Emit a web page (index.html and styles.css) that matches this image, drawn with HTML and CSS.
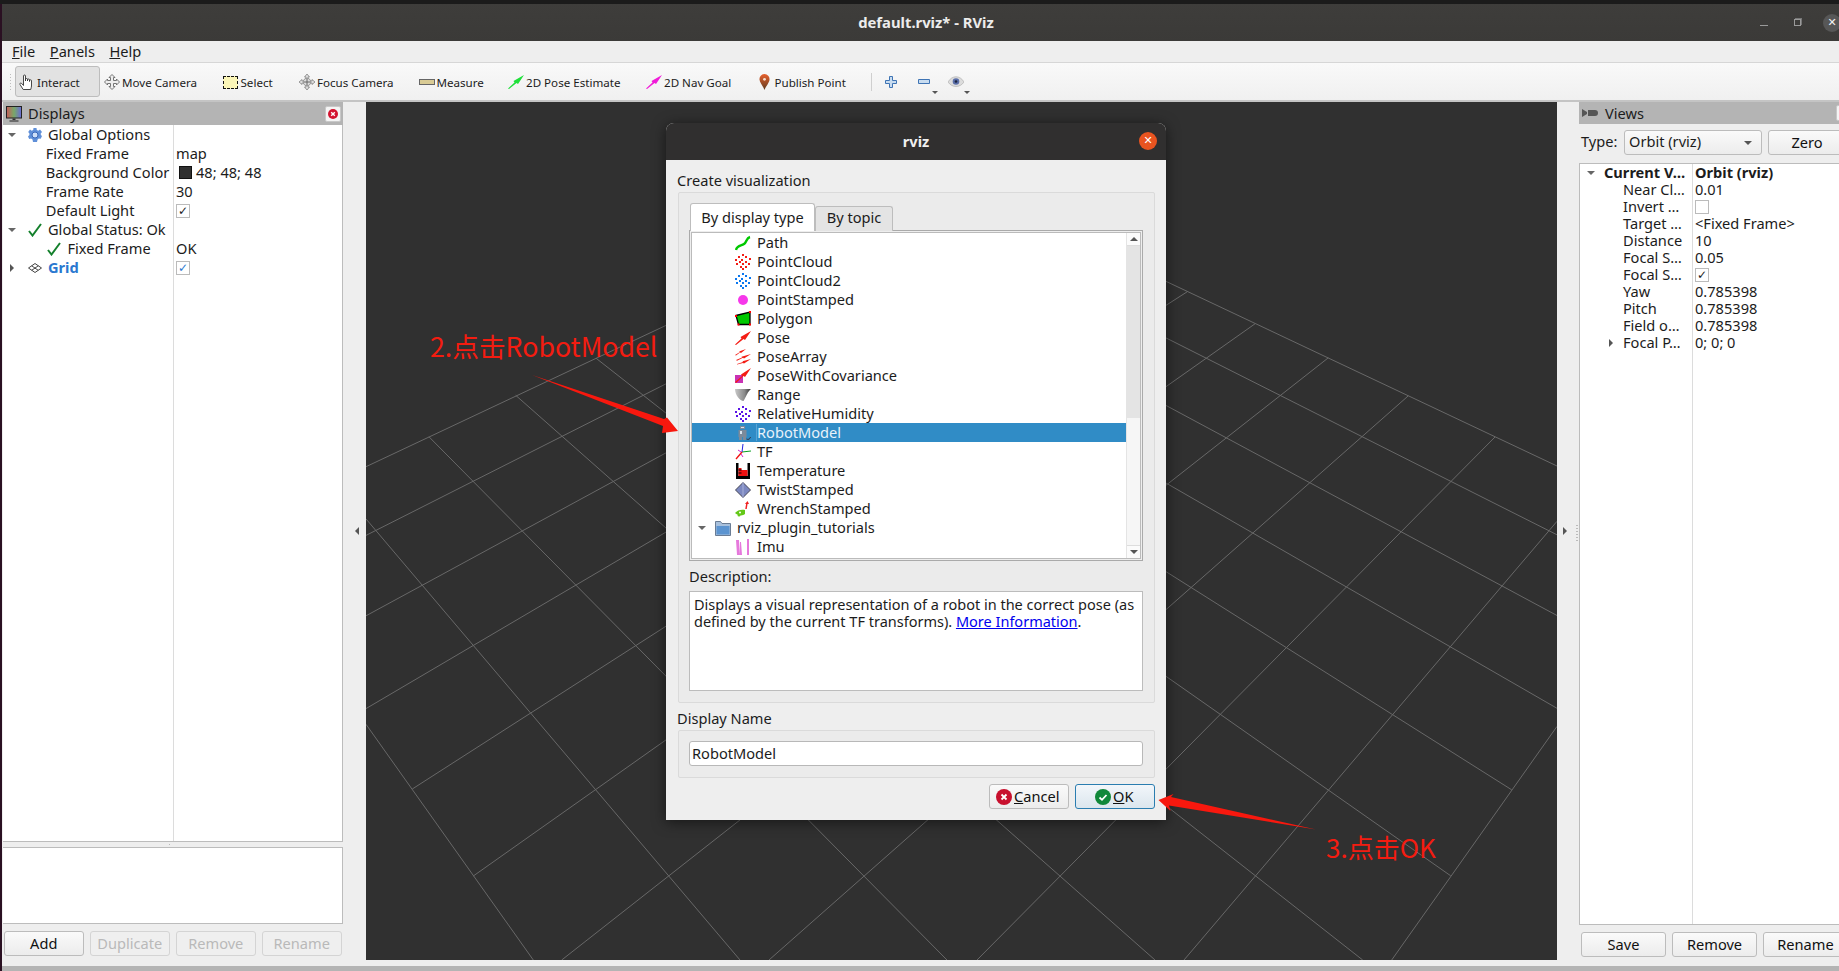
FILE: index.html
```html
<!DOCTYPE html>
<html>
<head>
    <meta charset="utf-8">
    <title>default.rviz* - RViz</title>
    <link rel="stylesheet" href="styles.css">
</head>
<body>
    <!-- icon set -->
    <svg class="defs" width="0" height="0">
        <defs>
            <linearGradient id="screen" x1="0" x2="1" y1="0" y2="0">
                <stop offset="0" stop-color="#c85a5a"/><stop offset=".5" stop-color="#78a868"/><stop offset="1" stop-color="#6a6ad8"/>
            </linearGradient>
            <linearGradient id="pin" x1="0" x2="0" y1="0" y2="1">
                <stop offset="0" stop-color="#e8602c"/><stop offset="1" stop-color="#5e3c22"/>
            </linearGradient>
            <linearGradient id="cone" x1="0" x2="1" y1="0" y2="0">
                <stop offset="0" stop-color="#c8c8c8"/><stop offset=".6" stop-color="#8a8a8a"/><stop offset="1" stop-color="#333"/>
            </linearGradient>
        </defs>
        <symbol id="i-monitor" viewBox="0 0 16 16"><rect x=".5" y=".5" width="15" height="11.5" fill="url(#screen)" stroke="#222"/><path d="M6.5 12.500h3v1.500h-3z" fill="#333"/><path d="M3.500 14.500h9v1h-9z" fill="#222"/></symbol>
        <symbol id="i-close" viewBox="0 0 10 10"><circle cx="5" cy="5" r="5" fill="#d3132f"/><path d="M3.200 3.200l3.600 3.600m0-3.600l-3.600 3.600" stroke="#fff" stroke-width="1.400"/></symbol>
        <symbol id="i-hand" viewBox="0 0 16 16"><path d="M4.500 9V2a1 1 0 0 1 2 0v5V5.500a1 1 0 0 1 2 0V7V6a1 1 0 0 1 2 0v1.500V6.800a1 1 0 0 1 2 0V12c0 1.500-.5 2-.8 3.500H4.200L1 10.500c-.6-1 .7-2 1.500-1.200L4.500 11.500z" fill="#fff" stroke="#333" stroke-width=".9"/></symbol>
        <symbol id="i-move" viewBox="0 0 16 16"><path d="M8 .5l3 3H9.500v3h3V5l3 3-3 3V9.500h-3v3H11l-3 3-3-3h1.500v-3h-3V11l-3-3 3-3v1.500h3v-3H5z" fill="#eee" stroke="#666" stroke-width=".9"/></symbol>
        <symbol id="i-focus" viewBox="0 0 16 16"><path d="M8 0l2.500 3H9v1.300A4 4 0 0 1 11.700 7H13V5.500L16 8l-3 2.500V9h-1.300A4 4 0 0 1 9 11.700V13h1.500L8 16l-2.500-3H7v-1.300A4 4 0 0 1 4.300 9H3v1.500L0 8l3-2.500V7h1.300A4 4 0 0 1 7 4.300V3H5.500z" fill="#ddd" stroke="#777" stroke-width=".7"/><path d="M8 4v8M4 8h8" stroke="#666"/></symbol>
        <symbol id="i-arrow" viewBox="0 0 16 14"><path d="M0 13.500l6.500-6L5.500 6 16 0 10 9 8.500 8 1 14z" fill="currentColor"/></symbol>
        <symbol id="i-pin" viewBox="0 0 11 16"><path d="M5.500 0a5 5 0 0 1 5 5.500c0 3-3.500 6.500-5 10.500C4 12 .5 8.500.5 5.500A5 5 0 0 1 5.500 0z" fill="url(#pin)"/><circle cx="5.500" cy="5.300" r="1.400" fill="#f6e0d0"/></symbol>
        <symbol id="i-plus" viewBox="0 0 12 12"><path d="M4.500.5h3v4h4v3h-4v4h-3v-4h-4v-3h4z" fill="#c8dcf0" stroke="#3f74b4"/></symbol>
        <symbol id="i-minus" viewBox="0 0 12 5"><path d="M.5.500h11v4H.5z" fill="#c8dcf0" stroke="#3f74b4"/></symbol>
        <symbol id="i-eye" viewBox="0 0 16 12"><path d="M0 6c4-7 12-7 16 0-4 6-12 6-16 0z" fill="#dcdcdc" stroke="#aaa" stroke-width=".6"/><circle cx="8" cy="5.500" r="3.300" fill="#5a6ea8"/><circle cx="8" cy="5.500" r="1.300" fill="#1c2440"/></symbol>
        <symbol id="i-gear" viewBox="0 0 14 14"><path d="M5.500 0h3l.3 2 1.500.7L12 1.500 14 4l-1.300 1.500.2 1.500 1.100 1-1.300 2.800-1.900-.3-1.200 1.100L9 14H5l-.5-2.400-1.400-1-1.900.5L0 8.500l1.400-1.400V5.500L.2 4 2 1.500l1.700 1.200 1.500-.7z" fill="#5f8fd8"/><circle cx="7" cy="7" r="3" fill="#cfe0f8" stroke="#3a68b8"/></symbol>
        <symbol id="i-check" viewBox="0 0 14 14"><path d="M1 8l3.500 4.500L13 1" fill="none" stroke="#14802c" stroke-width="2"/></symbol>
        <symbol id="i-grid" viewBox="0 0 14 10"><path d="M7 .5L13.500 5 7 9.500.5 5zM3.700 2.800l6.500 4.500M10.300 2.800L3.700 7.300" fill="none" stroke="#444"/></symbol>
        <symbol id="i-path" viewBox="0 0 16 16"><path d="M1 15c1-5 5-4 8-6s2-6 6-7" fill="none" stroke="#00c800" stroke-width="2.400"/></symbol>
        <symbol id="i-dots" viewBox="0 0 16 16"><path d="M7 0h2v2H7zM3 2h2v2H3zM10 2h2v2h-2zM14 4h2v2h-2zM0 5h2v2H0zM6 5h2v2H6zM4 7h2v2H4zM10 7h2v2h-2zM1 9h2v2H1zM7 9h2v2H7zM13 9h2v2h-2zM5 12h2v2H5zM10 12h2v2h-2zM7 14h2v2H7z" fill="currentColor"/></symbol>
        <symbol id="i-point" viewBox="0 0 16 16"><circle cx="8" cy="8" r="5" fill="#f638ea"/></symbol>
        <symbol id="i-polygon" viewBox="0 0 16 16"><path d="M1 4.500L15 1v12.500H3.500z" fill="#00c800" stroke="#000" stroke-width="1.300"/><path d="M0 4h2v2H0zM14 0h2v2h-2zM2.500 12.500h2v2h-2zM14 12.500h2v2h-2z" fill="#f00"/></symbol>
        <symbol id="i-posearray" viewBox="0 0 16 16"><path d="M0 6l5-3-1-.5L11 0 6 4l-1-.6-4 3zM1 11l6-2.500-.5-.8L16 5l-7 4.500-1-.7-6 3zM2 15l6-2-.5-.8L16 10l-7 4.500-1-.6-6 1.500z" fill="#f41c14"/></symbol>
        <symbol id="i-cov" viewBox="0 0 16 16"><path d="M0 7h8v8H0z" fill="#c832b4"/><path d="M0 14l7-6-1-1.500L16 0 10 9 8.500 8 1 15z" fill="#f41c14"/></symbol>
        <symbol id="i-range" viewBox="0 0 16 14"><path d="M0 1h16c-3 2-5 8-7.500 12C5 13 0 7 0 1z" fill="url(#cone)"/></symbol>
        <symbol id="i-robot" viewBox="0 0 16 16"><path d="M5 1h5v3H5zM3.500 5h8v7h-8zM4 12h3v3H4zM8 12h3v3H8z" fill="#7c8a9a"/><path d="M6 2h3v1H6zM5 6h2v3H5z" fill="#d8e4f0"/><path d="M11.500 14c2 1 3.500 0 4-2" fill="none" stroke="#334" /></symbol>
        <symbol id="i-tf" viewBox="0 0 16 16"><path d="M7 8l9-1" stroke="#08a020" fill="none"/><path d="M7 8L8 0" stroke="#2222e0" fill="none"/><path d="M7 8l-6 7" stroke="#f01010" stroke-width="1.300" fill="none"/><path d="M3 6l3 2M6 10l2 3" stroke="#d020d0" fill="none"/></symbol>
        <symbol id="i-temp" viewBox="0 0 14 16"><path d="M0 0h2.500v13h9V0H14v16H0z" fill="#000"/><path d="M2.500 5h3v2h6v6h-9z" fill="#ee1010"/><path d="M2.500 6.500h3v1h-3zM2.500 9.500h3v1h-3z" fill="#000"/></symbol>
        <symbol id="i-twist" viewBox="0 0 16 16"><path d="M8 .5L15.500 8 8 15.500.5 8z" fill="#7c88c0" stroke="#445" /><path d="M8 .5V15.500" stroke="#a8b0d8"/></symbol>
        <symbol id="i-wrench" viewBox="0 0 16 16"><path d="M0 12c2-3 7-4 10-3v4c-2 2-7 2-10-1z" fill="#64c818"/><circle cx="4" cy="14" r="1.500" fill="#64c818"/><path d="M11 8l1-6" stroke="#f02020" stroke-width="1.500"/><path d="M10 3l2.500-3L14 3z" fill="#f02020"/><circle cx="5" cy="11.500" r="1" fill="#fff"/></symbol>
        <symbol id="i-folder" viewBox="0 0 16 16"><path d="M.5 1.500h5l1.500 2h8.500v12H.5z" fill="#a8c0dc" stroke="#6a7c94"/><path d="M1.500 6h13v8.500h-13z" fill="#5c94d0"/></symbol>
        <symbol id="i-imu" viewBox="0 0 16 16"><path d="M1 1l3 0 1 15H2zM5 3h1l1 13H5zM12 0h2v16h-2z" fill="#e678dc"/></symbol>
        <symbol id="i-cam" viewBox="0 0 16 8"><path d="M0 0l5 3v2L0 8zM6 1h7a3 3 0 0 1 0 6H6z" fill="#555"/></symbol>
        <symbol id="i-cancel" viewBox="0 0 16 16"><circle cx="8" cy="8" r="8" fill="#c8102e"/><path d="M5.500 5.500l5 5m0-5l-5 5" stroke="#fff" stroke-width="1.800"/></symbol>
        <symbol id="i-ok" viewBox="0 0 16 16"><circle cx="8" cy="8" r="8" fill="#10883a"/><path d="M4.500 8.500l2.500 2.300L11.500 6" fill="none" stroke="#fff" stroke-width="1.800"/></symbol>
    </svg>

    <div class="topstrip"></div>
    <header class="titlebar">
        <div class="title">default.rviz* - RViz</div>
        <div class="winbtn w-min"><span class="win-min"></span></div>
        <div class="winbtn w-max"><span class="win-max"></span></div>
        <div class="winbtn w-close"><span class="win-close">&#10005;</span></div>
    </header>

    <nav class="menubar">
        <span><u>F</u>ile</span>
        <span><u>P</u>anels</span>
        <span><u>H</u>elp</span>
    </nav>

    <div class="toolbar">
        <div class="grip"></div>
        <div class="tool t-interact"><svg class="ico"><use href="#i-hand"/></svg>Interact</div>
        <div class="tool t-move"><svg class="ico"><use href="#i-move"/></svg>Move Camera</div>
        <div class="tool t-select"><span class="selbox"></span>Select</div>
        <div class="tool t-focus"><svg class="ico"><use href="#i-focus"/></svg>Focus Camera</div>
        <div class="tool t-measure"><span class="ruler"></span>Measure</div>
        <div class="tool t-pose"><svg class="ico green"><use href="#i-arrow"/></svg>2D Pose Estimate</div>
        <div class="tool t-nav"><svg class="ico magenta"><use href="#i-arrow"/></svg>2D Nav Goal</div>
        <div class="tool t-publish"><svg class="ico pin"><use href="#i-pin"/></svg>Publish Point</div>
        <div class="tool-sep"></div>
        <svg class="ico-plus"><use href="#i-plus"/></svg>
        <svg class="ico-minus"><use href="#i-minus"/></svg><span class="drop drop-minus"></span>
        <svg class="ico-eye"><use href="#i-eye"/></svg><span class="drop drop-eye"></span>
    </div>

    <main class="mainarea">
        <section class="panel-left">
            <div class="dock-title">
                <svg class="ico"><use href="#i-monitor"/></svg>
                <span class="dock-name">Displays</span>
                <span class="dock-close"><svg class="close-ico"><use href="#i-close"/></svg></span>
            </div>
            <div class="tree">
                <div class="prow"><div class="pname"><span class="tw open"></span><svg class="tico"><use href="#i-gear"/></svg>Global Options</div><div class="pval"></div></div>
                <div class="prow"><div class="pname child">Fixed Frame</div><div class="pval">map</div></div>
                <div class="prow"><div class="pname child">Background Color</div><div class="pval"><span class="swatch"></span>48; 48; 48</div></div>
                <div class="prow"><div class="pname child">Frame Rate</div><div class="pval">30</div></div>
                <div class="prow"><div class="pname child">Default Light</div><div class="pval"><span class="cb on">&#10003;</span></div></div>
                <div class="prow"><div class="pname"><span class="tw open"></span><svg class="tico"><use href="#i-check"/></svg>Global Status: Ok</div><div class="pval"></div></div>
                <div class="prow"><div class="pname child2"><svg class="tico"><use href="#i-check"/></svg>Fixed Frame</div><div class="pval">OK</div></div>
                <div class="prow"><div class="pname gridname"><span class="tw shut"></span><svg class="tico"><use href="#i-grid"/></svg>Grid</div><div class="pval"><span class="cb on blue">&#10003;</span></div></div>
                <div class="prow fill"><div class="pname"></div><div class="pval"></div></div>
            </div>
            <div class="split-h"></div>
            <div class="helpbox"></div>
            <div class="btnrow">
                <button class="qbtn">Add</button>
                <button class="qbtn off">Duplicate</button>
                <button class="qbtn off">Remove</button>
                <button class="qbtn off">Rename</button>
            </div>
        </section>

        <div class="sidehandle"><span class="arrow-l"></span></div>

        <div class="viewport">
            <svg class="grid3d" viewBox="366 102 1191 858">
                <g stroke="#686868" stroke-width="1" fill="none">
                    <path d="M366 466.700L963 185.500"/>
                    <path d="M366 535.400L1012 209"/>
                    <path d="M366 615.800L1067 235"/>
                    <path d="M366 708.600L1125 262"/>
                    <path d="M412.300 789L1187.300 291.700"/>
                    <path d="M473.300 876L1255 323.800"/>
                    <path d="M561.700 960L1328.300 357.800"/>
                    <path d="M769 960L1408.300 395.800"/>
                    <path d="M977 960L1495 437"/>
                    <path d="M1184 960L1557 521.300"/>
                    <path d="M1391.700 960L1557 726.400"/>
                    <path d="M963 185.500L1557 466"/>
                    <path d="M1100 304.700L1557 534.800"/>
                    <path d="M1100 370L1557 615.500"/>
                    <path d="M1100 445L1557 708.300"/>
                    <path d="M1100 530L1511.700 789.800"/>
                    <path d="M1000 560L1450.700 875.800"/>
                    <path d="M596 358.200L1362.700 960"/>
                    <path d="M515.700 395.300L1155 960"/>
                    <path d="M429 436.800L947 960"/>
                    <path d="M366 518.900L740 960"/>
                    <path d="M366 724.300L533.300 960"/>
                </g>
            </svg>
        </div>

        <div class="sidehandle right"><span class="arrow-r"></span><span class="vdots"></span></div>

        <section class="panel-right">
            <div class="dock-title short">
                <svg class="cam-ico"><use href="#i-cam"/></svg>
                <span class="dock-name">Views</span>
                <span class="dock-close"><svg class="close-ico"><use href="#i-close"/></svg></span>
            </div>
            <div class="typerow">
                <span class="typelabel">Type:</span>
                <div class="combo">Orbit (rviz)<span class="combo-arrow"></span></div>
                <button class="qbtn zero">Zero</button>
            </div>
            <div class="tree vtree">
                <div class="prow bold"><div class="pname"><span class="tw open"></span>Current V&#8230;</div><div class="pval">Orbit (rviz)</div></div>
                <div class="prow"><div class="pname">Near Cl&#8230;</div><div class="pval">0.01</div></div>
                <div class="prow"><div class="pname">Invert &#8230;</div><div class="pval"><span class="cb"></span></div></div>
                <div class="prow"><div class="pname">Target &#8230;</div><div class="pval">&lt;Fixed Frame&gt;</div></div>
                <div class="prow"><div class="pname">Distance</div><div class="pval">10</div></div>
                <div class="prow"><div class="pname">Focal S&#8230;</div><div class="pval">0.05</div></div>
                <div class="prow"><div class="pname">Focal S&#8230;</div><div class="pval"><span class="cb on">&#10003;</span></div></div>
                <div class="prow"><div class="pname">Yaw</div><div class="pval">0.785398</div></div>
                <div class="prow"><div class="pname">Pitch</div><div class="pval">0.785398</div></div>
                <div class="prow"><div class="pname">Field o&#8230;</div><div class="pval">0.785398</div></div>
                <div class="prow"><div class="pname"><span class="tw shut"></span>Focal P&#8230;</div><div class="pval">0; 0; 0</div></div>
                <div class="prow fill"><div class="pname"></div><div class="pval"></div></div>
            </div>
            <div class="btnrow vbtns">
                <button class="qbtn">Save</button>
                <button class="qbtn">Remove</button>
                <button class="qbtn">Rename</button>
            </div>
        </section>
    </main>
    <div class="statusbar"></div>

    <!-- modal dialog -->
    <div class="dialog">
        <div class="dlg-title">rviz<span class="dlg-close">&#10005;</span></div>
        <div class="dlg-label first">Create visualization</div>
        <div class="group main-group">
            <div class="tabs">
                <div class="tab active">By display type</div>
                <div class="tab">By topic</div>
            </div>
            <div class="tabpane">
                <div class="listbox">
                    <div class="rows">
                        <div class="lrow"><svg class="lico"><use href="#i-path"/></svg>Path</div>
                        <div class="lrow"><svg class="lico red"><use href="#i-dots"/></svg>PointCloud</div>
                        <div class="lrow"><svg class="lico azure"><use href="#i-dots"/></svg>PointCloud2</div>
                        <div class="lrow"><svg class="lico"><use href="#i-point"/></svg>PointStamped</div>
                        <div class="lrow"><svg class="lico"><use href="#i-polygon"/></svg>Polygon</div>
                        <div class="lrow"><svg class="lico red"><use href="#i-arrow"/></svg>Pose</div>
                        <div class="lrow"><svg class="lico"><use href="#i-posearray"/></svg>PoseArray</div>
                        <div class="lrow"><svg class="lico"><use href="#i-cov"/></svg>PoseWithCovariance</div>
                        <div class="lrow"><svg class="lico"><use href="#i-range"/></svg>Range</div>
                        <div class="lrow"><svg class="lico violet"><use href="#i-dots"/></svg>RelativeHumidity</div>
                        <div class="lrow sel"><svg class="lico"><use href="#i-robot"/></svg><span class="seltext">RobotModel</span></div>
                        <div class="lrow"><svg class="lico"><use href="#i-tf"/></svg>TF</div>
                        <div class="lrow"><svg class="lico"><use href="#i-temp"/></svg>Temperature</div>
                        <div class="lrow"><svg class="lico"><use href="#i-twist"/></svg>TwistStamped</div>
                        <div class="lrow"><svg class="lico"><use href="#i-wrench"/></svg>WrenchStamped</div>
                        <div class="lrow folder"><span class="tw open"></span><svg class="lico"><use href="#i-folder"/></svg>rviz_plugin_tutorials</div>
                        <div class="lrow"><svg class="lico"><use href="#i-imu"/></svg>Imu</div>
                    </div>
                    <div class="vscroll">
                        <div class="sb-btn"><span class="sb-up"></span></div>
                        <div class="sb-thumb"></div>
                        <div class="sb-rest"></div>
                        <div class="sb-btn"><span class="sb-down"></span></div>
                    </div>
                </div>
            </div>
            <div class="desc-label">Description:</div>
            <div class="descbox">Displays a visual representation of a robot in the correct pose (as<br>defined by the current TF transforms). <a href="#">More Information</a>.</div>
        </div>
        <div class="dlg-label second">Display Name</div>
        <div class="group name-group">
            <div class="nameinput">RobotModel</div>
        </div>
        <div class="dlg-buttons">
            <button class="dbtn"><svg class="dico"><use href="#i-cancel"/></svg><span><u>C</u>ancel</span></button>
            <button class="dbtn default"><svg class="dico"><use href="#i-ok"/></svg><span><u>O</u>K</span></button>
        </div>
    </div>

    <!-- red notes pasted on top of the screenshot -->
    <svg class="marks" viewBox="0 0 1839 971">
        <path d="M532 375L664 419 667 417.500 678 431 662 433 663 426z" fill="#f8180e"/>
        <path d="M1316 829.500L1171 797 1173.500 794 1158.500 800 1170.500 811 1169 805.500z" fill="#f8180e"/>
    </svg>
    <div class="note note-a">2.点击RobotModel</div>
    <div class="note note-b">3.点击OK</div>
</body>
</html>
```

FILE: styles.css
```css
* {
    box-sizing: border-box;
}
html, body {
    margin: 0;
    height: 100%;
}
body {
    width: 1839px;
    height: 971px;
    overflow: hidden;
    position: relative;
    padding-left: 2px;
    background-color: #2a1022;
    color: #1c1c1c;
    font: 14.600px/19px "Noto Sans", "Noto Sans CJK SC", sans-serif;
    display: flex;
    flex-direction: column;
}
.defs {
    position: absolute;
}
svg {
    display: block;
    flex: none;
}

/* window frame */
.topstrip {
    height: 4px;
    margin-left: -2px;
    background-color: #1b1b1b;
}
.titlebar {
    height: 37px;
    display: flex;
    align-items: center;
    padding-left: 96px;
    background: linear-gradient(#3e3d3b, #3b3a38);
}
.title {
    width: 1656px;
    flex: none;
    text-align: center;
    color: #ececec;
    font-weight: 700;
    font-size: 14.800px;
}
.winbtn {
    display: flex;
    align-items: center;
    justify-content: center;
    flex: none;
}
.w-min { width: 20px; }
.w-max { width: 46px; }
.w-close { width: 24px; }
.win-min {
    width: 8px;
    height: 1px;
    margin-top: 6px;
    background-color: #9a9a9a;
}
.win-max {
    width: 7px;
    height: 7px;
    border: 1px solid #9a9a9a;
    box-shadow: 1px -1px 0 #777;
}
.win-close {
    width: 18px;
    height: 18px;
    flex: none;
    border-radius: 50%;
    background-color: #575757;
    color: #f2f2f2;
    font: 11px/18px "DejaVu Sans", sans-serif;
    text-align: center;
}
.menubar {
    height: 22px;
    display: flex;
    gap: 14.500px;
    padding: 1px 0 0 10px;
    background-color: #eeeeee;
    border-bottom: 1px solid #d6d6d6;
}
.toolbar {
    height: 39px;
    display: flex;
    align-items: center;
    padding-left: 13px;
    position: relative;
    font-size: 11.600px;
    background: linear-gradient(#f9f9f9, #f0f0f0);
    border-bottom: 2px solid #c4c4c4;
}
.grip {
    width: 3px;
    height: 17px;
    margin-left: -6px;
    margin-right: 3px;
    flex: none;
    background: radial-gradient(circle, #bdbdbd 40%, transparent 45%) 0 0 / 3px 3px;
}
.tool {
    height: 31px;
    flex: none;
    display: flex;
    align-items: center;
    gap: 2px;
    padding-left: 4px;
    padding-top: 1px;
}
.ico {
    width: 16px;
    height: 16px;
}
.ico.green {
    color: #1fe03a;
    height: 14px;
}
.ico.magenta {
    color: #f01cd8;
    height: 14px;
}
.ico.pin {
    width: 11px;
    margin-right: 3px;
}
.t-interact {
    width: 85px;
    padding-left: 3px;
    background-color: #e2e2e2;
    border: 1px solid #bdbdbd;
    border-radius: 3px;
}
.t-move { width: 118.500px; }
.t-select { width: 76.500px; }
.t-focus { width: 119.500px; }
.t-measure { width: 89.500px; }
.t-pose { width: 138px; }
.t-nav { width: 112.500px; }
.t-publish { width: 116.500px; }
.selbox {
    width: 15px;
    height: 13px;
    background-color: #fbf6b8;
    border: 1px dashed #111;
    margin-right: 1px;
}
.ruler {
    width: 16px;
    height: 6px;
    background-color: #d9cb95;
    border: 1px solid #666;
}
.tool-sep {
    width: 1px;
    height: 18px;
    background-color: #cfcfcf;
    margin-right: 13px;
}
.ico-plus {
    width: 12px;
    height: 12px;
    margin-right: 21px;
}
.ico-minus {
    width: 12px;
    height: 5px;
}
.ico-eye {
    width: 16px;
    height: 12px;
    margin-left: 10px;
    margin-top: 1px;
}
.drop {
    border: 3px solid transparent;
    border-top: 3px solid #555;
    border-bottom: 0;
    margin: 21px 0 0 0;
}
.drop-minus {
    margin-left: 2px;
}

/* main row */
.mainarea {
    height: 864px;
    display: flex;
    background-color: #eeeeee;
}
.panel-left {
    width: 341px;
    flex: none;
    display: flex;
    flex-direction: column;
    padding-left: 1px;
    padding-bottom: 10px;
}
.dock-title {
    height: 23px;
    flex: none;
    display: flex;
    align-items: center;
    background-color: #b4b4b4;
    padding-left: 3px;
    gap: 6px;
}
.dock-title.short {
    height: 22px;
    gap: 5px;
}
.dock-name {
    flex: 1;
}
.dock-close {
    width: 16px;
    height: 16px;
    margin-right: 2px;
    background-color: #f4f4f4;
    border: 1px solid #c8c8c8;
    border-radius: 2px;
    display: flex;
    align-items: center;
    justify-content: center;
    flex: none;
}
.close-ico {
    width: 10px;
    height: 10px;
}
.cam-ico {
    width: 16px;
    height: 8px;
    margin-right: 2px;
}
.tree {
    flex: 1;
    display: flex;
    flex-direction: column;
    background-color: #fff;
    border: solid #bcbcbc;
    border-width: 0 1px 1px 0;
}
.prow {
    height: 19px;
    flex: none;
    display: grid;
    grid-template-columns: 170px 1fr;
}
.prow.fill {
    flex: 1;
}
.pname {
    display: flex;
    align-items: center;
    padding-left: 5px;
    white-space: nowrap;
}
.pname.child {
    padding-left: 42.800px;
}
.pname.child2 {
    padding-left: 43.500px;
}
.pname.child2 .tico {
    margin-right: 7px;
}
.gridname {
    color: #2a78d0;
    font-weight: 700;
}
.pval {
    display: flex;
    align-items: center;
    padding-left: 2px;
    border-left: 1px solid #dcdcdc;
    white-space: nowrap;
}
.tw {
    width: 10px;
    margin-right: 10px;
    flex: none;
    height: 0;
}
.tw.open {
    border: 4px solid transparent;
    border-top: 4px solid #666;
    border-bottom: 0;
    width: 8px;
    margin-right: 12px;
}
.tw.shut {
    border: 4px solid transparent;
    border-left: 4px solid #555;
    border-right: 0;
    width: 4px;
    margin: 0 14px 0 2px;
}
.tico {
    width: 14px;
    height: 14px;
    margin-right: 6px;
}
.gridname .tico {
    height: 10px;
}
.swatch {
    width: 13px;
    height: 13px;
    margin: 0 4px 0 3px;
    background-color: #303030;
    border: 1px solid #111;
}
.cb {
    width: 14px;
    height: 14px;
    border: 1px solid #bbb;
    background-color: #fff;
    text-align: center;
    font: 12px/12px "DejaVu Sans", sans-serif;
    font-weight: 700;
}
.cb.blue {
    color: #2a78d0;
}
.split-h {
    height: 5px;
    flex: none;
    background: radial-gradient(circle, #b8b8b8 40%, transparent 45%) 165px 1px / 3px 3px no-repeat;
}
.helpbox {
    height: 77px;
    flex: none;
    background-color: #fff;
    border: 1px solid #bcbcbc;
    border-left: 0;
}
.btnrow {
    display: flex;
    gap: 6.500px;
    margin-top: 7px;
    padding-left: 1px;
    padding-right: 1px;
    flex: none;
}
.qbtn {
    width: 79.500px;
    height: 25px;
    flex: none;
    padding: 0 0 2px;
    font: 14.600px "Noto Sans", sans-serif;
    color: #111;
    background: linear-gradient(#fafafa, #ececec);
    border: 1px solid #bcbcbc;
    border-radius: 3px;
}
.qbtn.off {
    color: #b9b9b9;
    border-color: #d4d4d4;
    background: #efefef;
}
.sidehandle {
    width: 23px;
    flex: none;
    display: flex;
    align-items: center;
    justify-content: center;
    padding-bottom: 6px;
    padding-left: 5px;
}
.sidehandle.right {
    width: 22px;
    padding-left: 0;
    position: relative;
}
.arrow-l {
    border: 4px solid transparent;
    border-right: 4px solid #555;
    border-left: 0;
}
.arrow-r {
    border: 4px solid transparent;
    border-left: 4px solid #555;
    border-right: 0;
    margin-right: 6px;
}
.vdots {
    position: absolute;
    right: 1px;
    top: 423px;
    width: 2px;
    height: 16px;
    background: repeating-linear-gradient(#bbb 0 1px, transparent 1px 3px);
}
.viewport {
    width: 1191px;
    height: 858px;
    flex: none;
    background-color: #303030;
}
.grid3d {
    width: 100%;
    height: 100%;
}
.panel-right {
    width: 275px;
    flex: none;
    display: flex;
    flex-direction: column;
    padding-bottom: 9px;
}
.typerow {
    display: flex;
    align-items: center;
    height: 25px;
    margin-top: 6px;
    flex: none;
    padding-left: 2px;
}
.typelabel {
    width: 43px;
    margin-top: -2px;
}
.combo {
    width: 138px;
    height: 25px;
    padding-left: 4px;
    line-height: 21px;
    position: relative;
    background: linear-gradient(#fafafa, #ececec);
    border: 1px solid #bcbcbc;
    border-radius: 3px;
}
.combo-arrow {
    position: absolute;
    right: 9px;
    top: 10px;
    border: 4px solid transparent;
    border-top: 4px solid #555;
    border-bottom: 0;
}
.qbtn.zero {
    margin-left: 6px;
    width: 78px;
}
.vtree {
    margin-top: 8px;
    border-width: 1px 0 1px 1px;
}
.vtree .prow {
    height: 17px;
    grid-template-columns: 112px 1fr;
    line-height: 17px;
}
.vtree .prow.fill {
    flex: 1;
}
.vtree .pname {
    padding-left: 43px;
}
.vtree .bold .pname {
    padding-left: 7px;
}
.vtree .bold .tw {
    margin-right: 9px;
}
.vtree .tw.shut {
    margin: 0 10px 0 -14px;
}
.bold {
    font-weight: 700;
}
.vbtns {
    margin-top: 7px;
    gap: 6px;
    padding-left: 2px;
}
.vbtns .qbtn {
    width: 85px;
}
.statusbar {
    flex: 1;
    background-color: #b4b4b4;
}

/* dialog */
.dialog {
    position: absolute;
    left: 666px;
    top: 123px;
    width: 500px;
    height: 697px;
    background-color: #eeeeee;
    border-radius: 8px 8px 0 0;
    box-shadow: 0 2px 14px rgba(0, 0, 0, 0.55);
}
.dlg-title {
    height: 37px;
    position: relative;
    background-color: #302f2f;
    border-radius: 8px 8px 0 0;
    color: #f0f0f0;
    text-align: center;
    font-weight: 700;
    font-size: 14.600px;
    line-height: 37px;
}
.dlg-close {
    position: absolute;
    right: 9px;
    top: 9px;
    width: 18px;
    height: 18px;
    border-radius: 50%;
    background-color: #e95420;
    color: #fff;
    font: 11px/18px "DejaVu Sans", sans-serif;
}
.dlg-label {
    padding-left: 11px;
    line-height: 20px;
    white-space: nowrap;
}
.dlg-label.first {
    height: 32px;
    padding-top: 10px;
}
.dlg-label.second {
    height: 27px;
    padding-top: 5px;
}
.group {
    margin-left: 12px;
    width: 477px;
    background-color: #ebebeb;
    border: 1px solid #dadada;
    border-radius: 2px;
    padding-left: 10px;
}
.main-group {
    height: 511px;
    padding-top: 10px;
}
.tabs {
    display: flex;
    align-items: flex-end;
    height: 28px;
    padding-left: 1px;
    margin-bottom: -1px;
    position: relative;
}
.tab {
    width: 78px;
    height: 25px;
    padding-top: 1px;
    text-align: center;
    background-color: #e4e4e4;
    border: 1px solid #bdbdbd;
    border-bottom: 0;
    border-radius: 3px 3px 0 0;
}
.tab.active {
    width: 125px;
    height: 28px;
    padding-top: 4px;
    background-color: #fff;
    position: relative;
    z-index: 1;
}
.tabpane {
    width: 454px;
    height: 331px;
    padding: 1px;
    background-color: #eeeeee;
    border: 1px solid #aaaaaa;
}
.listbox {
    height: 327px;
    display: flex;
    background-color: #fff;
    border: 1px solid #bbb;
}
.rows {
    width: 434px;
    flex: none;
}
.lrow {
    height: 19px;
    display: flex;
    align-items: center;
    padding-left: 43px;
    white-space: nowrap;
}
.lrow.sel {
    background-color: #308cc6;
    color: #e8f2fa;
}
.seltext {
    box-shadow: -2px 0 0 -1px #5aa4d4;
}
.lrow.folder {
    padding-left: 6px;
}
.lrow.folder .lico {
    margin-right: 6px;
}
.lrow .tw.open {
    margin-right: 9px;
}
.lico {
    width: 16px;
    height: 16px;
    margin-right: 6px;
}
.lico.red { color: #f41c14; }
.lico.azure { color: #0a78f0; }
.lico.violet { color: #5a14e6; }
.vscroll {
    flex: 1;
    display: flex;
    flex-direction: column;
    border-left: 1px solid #e4e4e4;
}
.sb-btn {
    height: 13px;
    display: flex;
    align-items: center;
    justify-content: center;
    background-color: #fbfbfb;
    border-bottom: 1px solid #ddd;
}
.sb-btn:last-child {
    border-top: 1px solid #ddd;
    border-bottom: 0;
}
.sb-up {
    border: 4px solid transparent;
    border-bottom: 4px solid #555;
    border-top: 0;
}
.sb-down {
    border: 4px solid transparent;
    border-top: 4px solid #555;
    border-bottom: 0;
}
.sb-thumb {
    height: 172px;
    background-color: #e4e4e4;
}
.sb-rest {
    flex: 1;
    background-color: #f6f6f6;
}
.desc-label {
    height: 30px;
    line-height: 31px;
}
.descbox {
    width: 454px;
    height: 100px;
    padding: 4px 0 0 4px;
    background-color: #fff;
    border: 1px solid #bcbcbc;
    line-height: 17px;
    white-space: nowrap;
    font-size: 14.500px;
}
.descbox a {
    color: #0000ee;
}
.name-group {
    height: 48px;
    padding-top: 10px;
}
.nameinput {
    width: 454px;
    height: 25px;
    padding-left: 2px;
    line-height: 23px;
    background-color: #fff;
    border: 1px solid #b8b8b8;
    border-radius: 3px;
}
.dlg-buttons {
    display: flex;
    justify-content: flex-end;
    gap: 6px;
    margin-top: 6px;
    padding-right: 11px;
}
.dbtn {
    width: 80px;
    height: 25px;
    padding: 0 0 0 6px;
    display: flex;
    align-items: center;
    gap: 2px;
    font: 14.600px "Noto Sans", sans-serif;
    color: #111;
    background: linear-gradient(#fafafa, #ececec);
    border: 1px solid #bcbcbc;
    border-radius: 3px;
}
.dbtn span {
    margin-top: -2px;
}
.dbtn.default {
    padding-left: 19px;
    background: linear-gradient(#f2f6fa, #dbe6ee);
    border-color: #2a7db0;
}
.dico {
    width: 16px;
    height: 16px;
}

/* notes */
.marks {
    position: absolute;
    left: 0;
    top: 0;
    width: 1839px;
    height: 971px;
    pointer-events: none;
}
.note {
    position: absolute;
    color: #f41c10;
    font: 26.700px/30px "Noto Sans CJK SC", "Noto Sans", sans-serif;
    white-space: nowrap;
}
.note-a {
    left: 430px;
    top: 331px;
}
.note-b {
    left: 1326px;
    top: 832px;
    font-size: 26px;
}
```
